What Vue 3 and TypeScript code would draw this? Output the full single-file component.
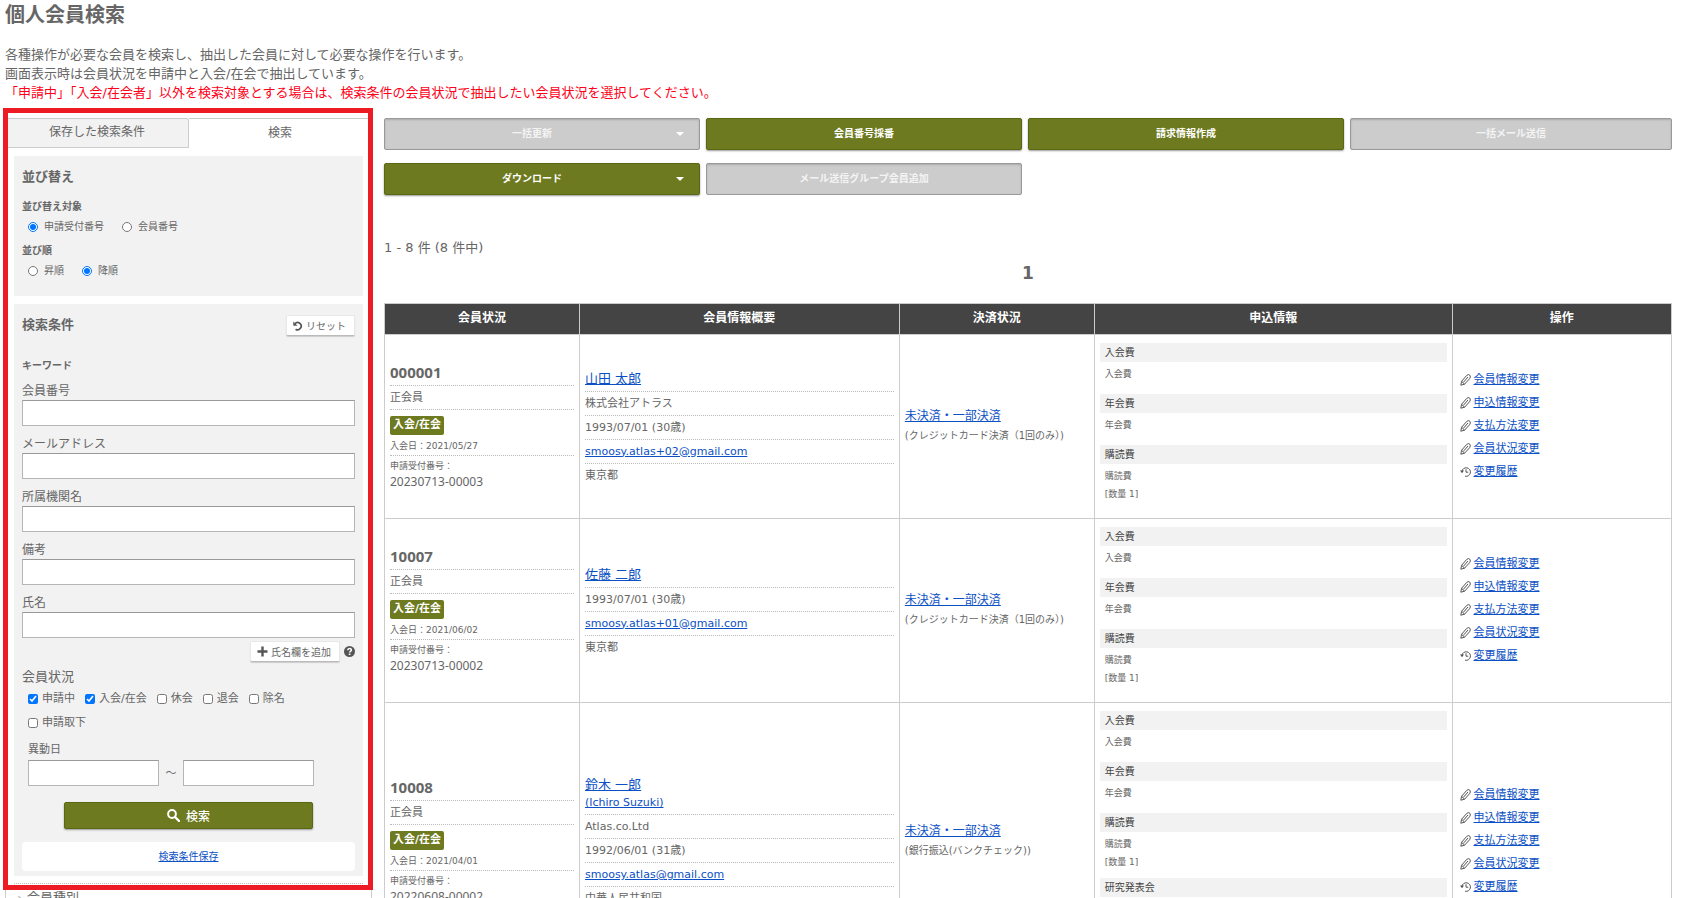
<script setup lang="ts">
import { ref } from 'vue'

interface Fee {
  title: string
  lines: string[]
}
interface Member {
  no: string
  joined: string
  receipt: string
  name: string
  latinName?: string
  details: string[]
  email: string
  region: string
  payment: string
  fees: Fee[]
  long?: boolean
}

const baseFees: Fee[] = [
  { title: '入会費', lines: ['入会費'] },
  { title: '年会費', lines: ['年会費'] },
  { title: '購読費', lines: ['購読費', '[数量 1]'] },
]

const members: Member[] = [
  {
    no: '000001', joined: '2021/05/27', receipt: '20230713-00003', name: '山田 太郎',
    details: ['株式会社アトラス', '1993/07/01 (30歳)'], email: 'smoosy.atlas+02@gmail.com', region: '東京都',
    payment: '(クレジットカード決済（1回のみ）)', fees: baseFees,
  },
  {
    no: '10007', joined: '2021/06/02', receipt: '20230713-00002', name: '佐藤 二郎',
    details: ['1993/07/01 (30歳)'], email: 'smoosy.atlas+01@gmail.com', region: '東京都',
    payment: '(クレジットカード決済（1回のみ）)', fees: baseFees,
  },
  {
    no: '10008', joined: '2021/04/01', receipt: '20220608-00002', name: '鈴木 一郎', latinName: '(Ichiro Suzuki)',
    details: ['Atlas.co.Ltd', '1992/06/01 (31歳)'], email: 'smoosy.atlas@gmail.com', region: '中華人民共和国',
    payment: '(銀行振込(バンクチェック))', fees: [...baseFees, { title: '研究発表会', lines: ['研究発表会'] }], long: true,
  },
]

const actions = [
  { label: '一括更新', disabled: true, caret: true },
  { label: '会員番号採番', disabled: false, caret: false },
  { label: '請求情報作成', disabled: false, caret: false },
  { label: '一括メール送信', disabled: true, caret: false },
  { label: 'ダウンロード', disabled: false, caret: true },
  { label: 'メール送信グループ会員追加', disabled: true, caret: false },
]

const keywords = ['会員番号', 'メールアドレス', '所属機関名', '備考', '氏名']
const statuses = ['申請中', '入会/在会', '休会', '退会', '除名', '申請取下']
const operations = ['会員情報変更', '申込情報変更', '支払方法変更', '会員状況変更']

const sortKey = ref('申請受付番号')
const sortOrder = ref('降順')
const checked = ref(['申請中', '入会/在会'])
</script>

<template>
  <div class="page">
    <h1>個人会員検索</h1>
    <p class="lead">
      各種操作が必要な会員を検索し、抽出した会員に対して必要な操作を行います。<br />
      画面表示時は会員状況を申請中と入会/在会で抽出しています。<br />
      <span class="warn">「申請中」「入会/在会者」以外を検索対象とする場合は、検索条件の会員状況で抽出したい会員状況を選択してください。</span>
    </p>

    <div class="columns">
      <aside class="sidebar">
        <div class="focus-frame"></div>
        <div class="tabs">
          <button type="button" class="tab">保存した検索条件</button>
          <button type="button" class="tab active">検索</button>
        </div>

        <section class="panel sort">
          <h2>並び替え</h2>
          <h3>並び替え対象</h3>
          <div class="radios">
            <label v-for="k in ['申請受付番号', '会員番号']" :key="k">
              <input v-model="sortKey" type="radio" name="key" :value="k" />{{ k }}
            </label>
          </div>
          <h3>並び順</h3>
          <div class="radios">
            <label v-for="o in ['昇順', '降順']" :key="o">
              <input v-model="sortOrder" type="radio" name="order" :value="o" />{{ o }}
            </label>
          </div>
        </section>

        <form class="panel search" @submit.prevent>
          <div class="search-head">
            <h2>検索条件</h2>
            <button type="button" class="small-btn">
              <svg width="10" height="10" viewBox="0 0 10 10" fill="none" stroke="#555">
                <path d="M2 2.600A3.600 3.600 0 1 1 2.600 8.200" stroke-width="1.700" />
                <path d="M0.300 0.500v4.200h4.200z" fill="#555" stroke="none" />
              </svg>
              リセット
            </button>
          </div>
          <h3 class="kw">キーワード</h3>
          <div v-for="(k, i) in keywords" :key="k" class="field">
            <label :for="'kw' + i">{{ k }}</label>
            <input :id="'kw' + i" type="text" />
          </div>
          <div class="add-row">
            <button type="button" class="small-btn">
              <svg width="11" height="11" viewBox="0 0 11 11"><path d="M4.300 0.500h2.400v3.800h3.800v2.400H6.700v3.800H4.300V6.700H0.500V4.300h3.800z" fill="#555" /></svg>
              氏名欄を追加
            </button>
            <svg width="11" height="11" viewBox="0 0 11 11">
              <circle cx="5.500" cy="5.500" r="5.500" fill="#555" />
              <path d="M3.700 4.200C3.700 2 7.400 2 7.400 4c0 1.300-1.800 1.300-1.800 2.600" fill="none" stroke="#fff" stroke-width="1.500" />
              <rect x="4.800" y="7.500" width="1.600" height="1.500" fill="#fff" />
            </svg>
          </div>

          <div class="group-label">会員状況</div>
          <div class="checks">
            <label v-for="s in statuses" :key="s">
              <input v-model="checked" type="checkbox" :value="s" />{{ s }}
            </label>
          </div>
          <div class="dates">
            <label for="from">異動日</label>
            <div class="date-row">
              <input id="from" type="text" />
              <span>～</span>
              <input id="to" type="text" aria-label="異動日（終了）" />
            </div>
          </div>
          <button type="submit" class="btn submit">
            <svg width="13" height="13" viewBox="0 0 13 13" fill="none" stroke="#fff">
              <circle cx="5" cy="5" r="3.900" stroke-width="2" />
              <path d="M8 8l4 4" stroke-width="2.400" stroke-linecap="round" />
            </svg>
            検索
          </button>
          <div class="save"><a href="#">検索条件保存</a></div>
        </form>

        <div class="more"><a href="#"><span>›</span>会員種別</a></div>
      </aside>

      <main>
        <div class="actions">
          <button v-for="a in actions" :key="a.label" type="button" class="btn" :disabled="a.disabled">
            <span>{{ a.label }}</span>
            <i v-if="a.caret" class="caret"></i>
          </button>
        </div>
        <div class="count">1 - 8 件 (8 件中)</div>
        <div class="pager">1</div>

        <table>
          <colgroup>
            <col class="c-state" /><col class="c-info" /><col class="c-pay" /><col class="c-fee" /><col class="c-op" />
          </colgroup>
          <thead>
            <tr><th>会員状況</th><th>会員情報概要</th><th>決済状況</th><th>申込情報</th><th>操作</th></tr>
          </thead>
          <tbody>
            <tr v-for="m in members" :key="m.no" :class="{ long: m.long }">
              <td>
                <ul class="lined state">
                  <li class="no">{{ m.no }}</li>
                  <li class="kind">正会員</li>
                  <li class="badge-row">
                    <span class="badge">入会/在会</span>
                    <div class="joined">入会日：{{ m.joined }}</div>
                  </li>
                  <li class="receipt">
                    <div class="cap">申請受付番号：</div>
                    <div class="latin">{{ m.receipt }}</div>
                  </li>
                </ul>
              </td>
              <td>
                <ul class="lined">
                  <li>
                    <a href="#" class="name">{{ m.name }}</a>
                    <template v-if="m.latinName"><br /><a href="#">{{ m.latinName }}</a></template>
                  </li>
                  <li v-for="d in m.details" :key="d">{{ d }}</li>
                  <li><a href="#" class="mail">{{ m.email }}</a></li>
                  <li>{{ m.region }}</li>
                </ul>
              </td>
              <td class="pay">
                <a href="#">未決済・一部決済</a>
                <div>{{ m.payment }}</div>
              </td>
              <td class="fee">
                <dl v-for="f in m.fees" :key="f.title">
                  <dt>{{ f.title }}</dt>
                  <dd><div v-for="l in f.lines" :key="l">{{ l }}</div></dd>
                </dl>
              </td>
              <td class="ops">
                <ul>
                  <li v-for="o in operations" :key="o">
                    <svg width="11" height="12" viewBox="0 0 11 12" fill="none" stroke="#555">
                      <path d="M0.800 11.200L1.600 7.300 6.600 1.500Q8.500-0.300 9.900 1.300 11 2.900 9.600 4.700L4.600 10.200z M1.600 7.300l3 2.900M3.400 8.300L8 3" />
                    </svg>
                    <a href="#">{{ o }}</a>
                  </li>
                  <li>
                    <svg width="11" height="12" viewBox="0 0 11 12" fill="none" stroke="#555">
                      <path d="M1.900 5.500A4.300 4.300 0 1 1 5 10.200M6 3.200v3h2.300" />
                      <path d="M0 4.600h4L2 7.300z" fill="#555" stroke="none" />
                    </svg>
                    <a href="#">変更履歴</a>
                  </li>
                </ul>
              </td>
            </tr>
          </tbody>
        </table>
      </main>
    </div>
  </div>
</template>

<style>
body {
  margin: 0;
  background: #fff;
}
</style>

<style scoped>
* {
  box-sizing: border-box;
}
.page {
  height: 100vh;
  overflow: hidden;
  padding: 0 18px 0 5px;
  color: #666;
  font: 11px/17px "DejaVu Sans", "Noto Sans CJK JP", sans-serif;
}
button,
input {
  font-family: inherit;
  color: inherit;
}
h1, h2, h3, p, ul, dl, dd {
  margin: 0;
  padding: 0;
}
ul {
  list-style: none;
}
a {
  color: #0b50c4;
}
h1 {
  font-size: 20px;
  line-height: 30px;
  margin-bottom: 15px;
}
.lead {
  font-size: 13px;
  line-height: 19px;
  margin-bottom: 16px;
}
.warn {
  color: #ff0018;
}
.columns {
  display: flex;
  align-items: flex-start;
  gap: 12px;
}

/* sidebar */
.sidebar {
  position: relative;
  flex: 0 0 367px;
  border: 1px solid #ccc;
  border-top: 0;
}
.focus-frame {
  position: absolute;
  top: -10px;
  left: -3px;
  right: -2px;
  height: 782px;
  border: 5px solid #ed1c24;
  pointer-events: none;
}
.tabs {
  display: flex;
  margin-bottom: 8px;
}
.tab {
  flex: 1;
  height: 30px;
  padding: 0 0 5px;
  border: 1px solid #ccc;
  border-width: 1px 1px 1px 0;
  border-radius: 0 3px 0 0;
  background: #f2f2f2;
  font-size: 12px;
}
.tab.active {
  border-width: 1px 0 0;
  background: #fff;
}
.panel {
  margin: 0 8px 8px;
  padding: 0 8px;
  background: #f2f2f2;
}
h2 {
  font-size: 13px;
  line-height: 20px;
}
h3 {
  font-size: 10px;
  line-height: 16px;
}
.sort {
  padding-top: 11px;
  padding-bottom: 9px;
}
.sort h2 {
  margin-bottom: 12px;
}
.radios {
  display: flex;
  gap: 18px;
  padding: 3px 6px 8px;
  font-size: 10px;
  line-height: 17px;
}
.radios label {
  display: flex;
  align-items: center;
  gap: 6px;
}
.radios input,
.checks input {
  width: 10px;
  height: 10px;
  margin: 0;
}
.search {
  padding-top: 11px;
  padding-bottom: 5px;
  margin-bottom: 7px;
}
.search-head {
  display: flex;
  justify-content: space-between;
  align-items: flex-start;
  height: 43px;
}
.small-btn {
  display: flex;
  align-items: center;
  gap: 3px;
  height: 21px;
  padding: 0 8px 0 6px;
  border: 1px solid #e8e8e8;
  border-bottom-color: #bbb;
  border-radius: 2px;
  background: #fff;
  box-shadow: 0 1px 1px #ccc;
  font-size: 10px;
}
.kw {
  margin-bottom: 8px;
}
.field label {
  display: block;
  font-size: 12px;
  line-height: 18px;
}
.field {
  margin-bottom: 9px;
}
.field input,
.date-row input {
  display: block;
  width: 100%;
  height: 26px;
  padding: 0 5px;
  border: 1px solid #b5b5b5;
  border-top-color: #999;
  background: #fff;
}
.add-row {
  display: flex;
  justify-content: flex-end;
  align-items: center;
  gap: 4px;
  margin: -6px 0 5px;
}
.group-label {
  font-size: 13px;
  line-height: 20px;
}
.checks {
  display: flex;
  flex-wrap: wrap;
  column-gap: 10px;
  row-gap: 6px;
  padding: 3px 36px 0 6px;
  line-height: 18px;
}
.checks label {
  display: flex;
  align-items: center;
  gap: 4px;
}
.dates {
  padding: 9px 41px 0 6px;
}
.dates label {
  display: block;
  line-height: 18px;
}
.date-row {
  display: flex;
  align-items: center;
  margin-top: 1px;
}
.date-row input {
  flex: 1;
  min-width: 0;
}
.date-row span {
  width: 24px;
  text-align: center;
}
.btn {
  display: flex;
  align-items: center;
  justify-content: center;
  height: 32px;
  padding: 0 9px 3px;
  border: 1px solid #5b6813;
  border-radius: 2px;
  background: #6d7a1f;
  box-shadow: 0 1px 2px #999;
  color: #fff;
  font-size: 10px;
  font-weight: 700;
}
.btn:disabled {
  border-color: #999;
  background: #ccc;
  box-shadow: inset 0 1px 2px #aaa;
  color: #f4f4f4;
}
.btn span {
  flex: 1;
}
.submit {
  width: 75%;
  height: 27px;
  margin: 16px auto 13px;
  gap: 6px;
  padding-bottom: 0;
  font-size: 12px;
  font-weight: 500;
}
.save {
  padding: 6px;
  border-radius: 4px;
  background: #fff;
  font-size: 10px;
  text-align: center;
}
.more {
  margin: 0 8px;
  padding: 4px 3px;
  border-top: 1px dotted #bbb;
  font-size: 13px;
  line-height: 20px;
}
.more a {
  color: inherit;
  text-decoration: none;
}
.more span {
  display: inline-block;
  width: 10px;
  color: #aaa;
}

/* results */
main {
  flex: 1;
  min-width: 0;
}
.actions {
  display: grid;
  grid-template-columns: repeat(4, 1fr);
  row-gap: 13px;
}
.actions .btn:not(:nth-child(4)) {
  margin-right: 6px;
}
.caret {
  width: 20px;
  display: flex;
  justify-content: center;
}
.caret::after {
  content: '';
  margin-top: 2px;
  border: 4px solid transparent;
  border-top-color: #fff;
  border-bottom: 0;
}
.count {
  margin-top: 43px;
  font-size: 13px;
  line-height: 20px;
}
.pager {
  margin: 5px 0 20px;
  font-size: 17px;
  font-weight: 700;
  line-height: 20px;
  text-align: center;
}
table {
  width: 100%;
  table-layout: fixed;
  border-collapse: collapse;
}
.c-state { width: 15.150%; }
.c-info { width: 24.850%; }
.c-pay { width: 15.150%; }
.c-fee { width: 27.800%; }
th,
td {
  border: 1px solid #ccc;
}
th {
  height: 31px;
  padding: 0 0 2px;
  background: #444;
  color: #fff;
  font-size: 12px;
}
td {
  padding: 8px 5px;
  text-align: left;
  vertical-align: middle;
}
.long td {
  height: 278px;
}
.lined li {
  padding: 3px 0;
  border-bottom: 1px dotted #bbb;
}
.lined li:last-child {
  border-bottom: 0;
}
.lined .no {
  padding: 0 0 4px;
  font-family: "Noto Sans", sans-serif;
  font-size: 15px;
  font-weight: 700;
}
.lined .badge-row {
  padding: 6px 0 1px;
}
.badge {
  display: block;
  width: fit-content;
  padding: 0 3px 2px;
  border-radius: 2px;
  background: #6d7a1f;
  color: #fff;
  font-weight: 700;
}
.joined {
  margin-top: 3px;
  font-size: 9px;
  line-height: 16px;
}
.lined .receipt {
  padding: 3px 0 0;
}
.cap {
  font-size: 9px;
  line-height: 14px;
}
.latin {
  font-family: "Noto Sans", sans-serif;
  font-size: 12px;
}
.name {
  font-size: 13px;
}
.pay {
  padding-bottom: 10px;
  font-size: 10px;
  line-height: 19px;
}
.pay a {
  font-size: 12px;
}
.fee {
  vertical-align: top;
}
dt {
  padding-left: 5px;
  background: #f2f2f2;
  color: #444;
  font-size: 10px;
  line-height: 19px;
}
dd {
  min-height: 32px;
  padding: 3px 0 7px 5px;
  font-size: 9px;
  line-height: 18px;
}
.ops {
  padding-left: 7px;
  padding-bottom: 10px;
}
.ops li {
  display: flex;
  align-items: center;
  gap: 3px;
  line-height: 23px;
}
</style>
